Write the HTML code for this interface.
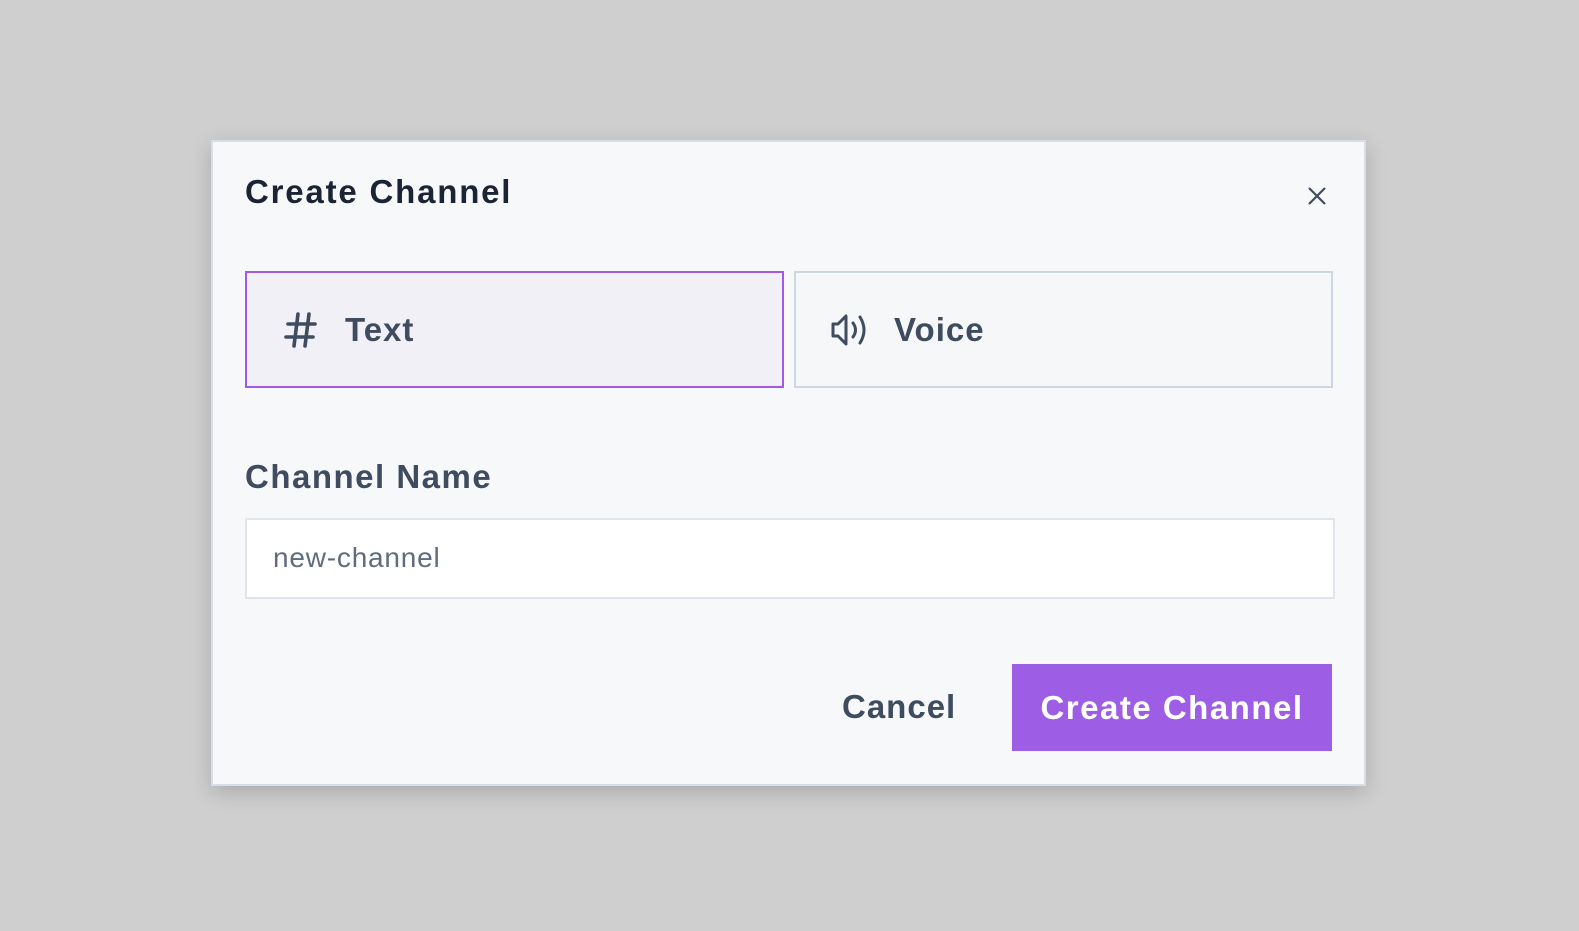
<!DOCTYPE html>
<html><head><style>
body{margin:0;width:1579px;height:931px;background:#cfcfcf;font-family:"Liberation Sans",sans-serif;position:relative;overflow:hidden}
.m{position:absolute;left:211px;top:140px;width:1151px;height:642px;background:#f7f8fa;border:2px solid #d6dee8;box-shadow:0 6px 20px rgba(0,0,0,.18)}
.t{position:absolute;left:32px;top:31px;font-size:33px;font-weight:bold;color:#1b2434;letter-spacing:1.8px}
.x{position:absolute;left:1093px;top:43px}
.opt{position:absolute;top:129px;width:539px;height:117px;box-sizing:border-box;border:2px solid #cdd6e2;background:#f6f7f9;font-size:33px;font-weight:bold;color:#3f4c60;letter-spacing:1px}
.opt span{position:absolute;top:38px}
.lab{position:absolute;left:32px;top:316px;font-size:33px;font-weight:bold;color:#3f4c60;letter-spacing:1.5px}
.in{position:absolute;left:32px;top:376px;width:1090px;height:81px;box-sizing:border-box;background:#fff;border:2px solid #e1e5eb}
.in span{position:absolute;left:26px;top:22px;font-size:28px;color:#5f6b7e;letter-spacing:0.8px}
.c{position:absolute;left:629px;top:546px;font-size:33px;font-weight:bold;color:#3f4c60;letter-spacing:1px}
.b{position:absolute;left:799px;top:522px;width:320px;height:87px;background:#9d5ee5;color:#fff;font-size:33px;font-weight:bold;text-align:center;line-height:87px;letter-spacing:1.5px}
</style></head><body>
<div class="m">
<div class="t">Create Channel</div>
<svg class="x" width="22" height="22" viewBox="0 0 22 22"><path d="M3 3L19 19M19 3L3 19" stroke="#3f4c60" stroke-width="2.2"/></svg>
<div class="opt" style="left:32px;border-color:#a259e6;background:#f2f0f7">
<svg style="position:absolute;left:36px;top:38px" width="34" height="38" viewBox="0 0 34 38"><path d="M15 3L11 35M26 3L22 35M5 13H32M3 26H30" stroke="#3f4c60" stroke-width="3.6" stroke-linecap="round"/></svg>
<span style="left:98px">Text</span></div>
<div class="opt" style="left:581px">
<svg style="position:absolute;left:34px;top:38px" width="42" height="38" viewBox="0 0 42 38"><path d="M3 13H8L16 5V33L8 25H3Z" fill="none" stroke="#3f4c60" stroke-width="3" stroke-linejoin="round"/><path d="M23 12Q28 19 23 26M30 6Q38 19 30 32" fill="none" stroke="#3f4c60" stroke-width="3" stroke-linecap="round"/></svg>
<span style="left:98px">Voice</span></div>
<div class="lab">Channel Name</div>
<div class="in"><span>new-channel</span></div>
<div class="c">Cancel</div>
<div class="b">Create Channel</div>
</div>
</body></html>
